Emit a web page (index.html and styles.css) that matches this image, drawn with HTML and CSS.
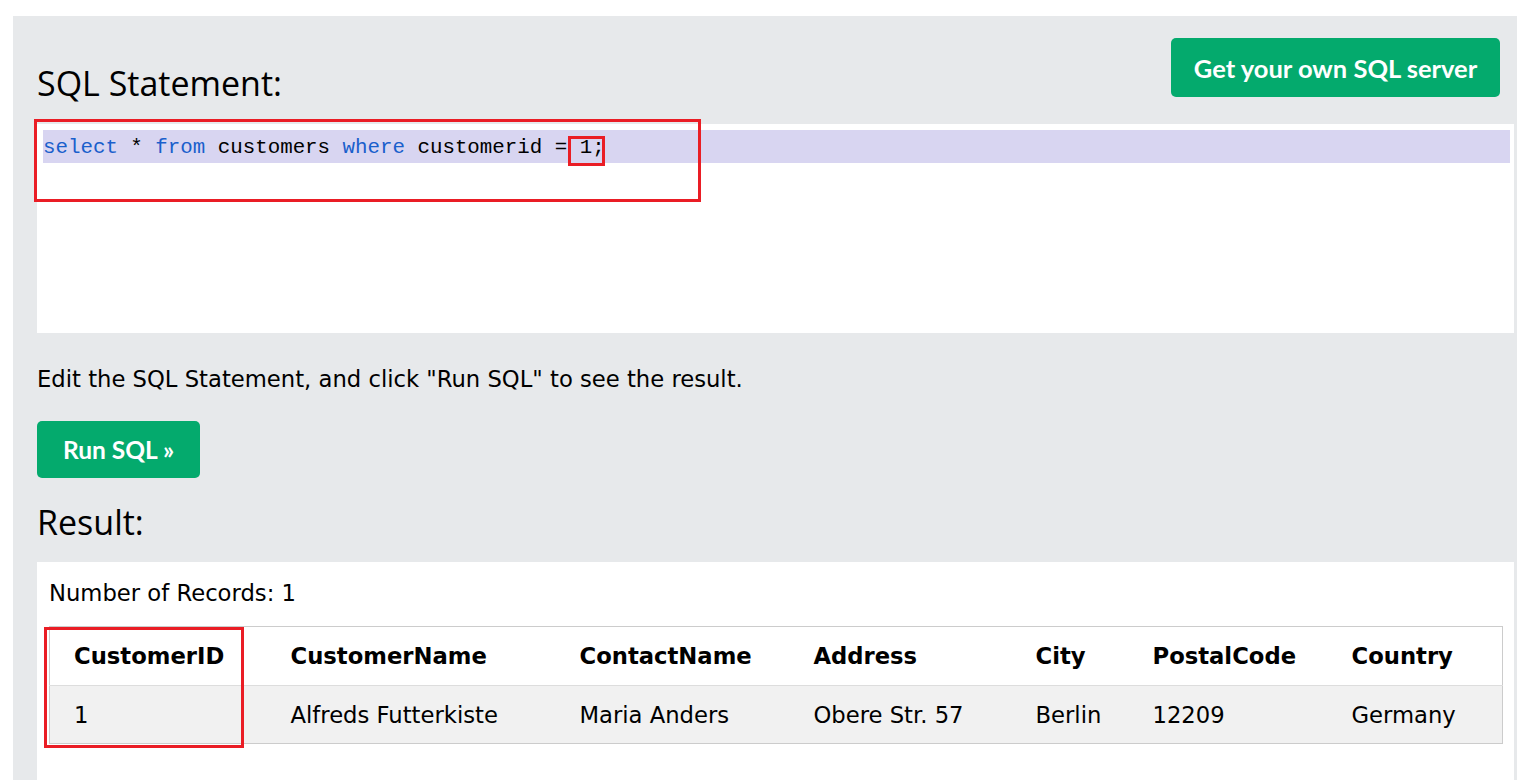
FILE: index.html
```html
<!DOCTYPE html>
<html>
<head>
<meta charset="utf-8">
<title>SQL Tryit</title>
<link rel="stylesheet" href="styles.css">
</head>
<body>
<div class="panel">
  <div class="head-row">
    <h2 class="title">SQL Statement:</h2>
    <a class="btn btn-server">Get your own SQL server</a>
  </div>
  <div class="editor">
    <div class="code-line"><span class="kw">select</span> * <span class="kw">from</span> customers <span class="kw">where</span> customerid = <span class="val">1;</span></div>
  </div>
  <p class="hint">Edit the SQL Statement, and click "Run SQL" to see the result.</p>
  <a class="btn btn-run">Run SQL »</a>
  <h2 class="title result-title">Result:</h2>
  <div class="result">
    <div class="records">Number of Records: 1</div>
    <table class="data">
      <colgroup>
        <col class="c1"><col class="c2"><col class="c3"><col class="c4"><col class="c5"><col class="c6"><col class="c7">
      </colgroup>
      <thead>
        <tr><th>CustomerID</th><th>CustomerName</th><th>ContactName</th><th>Address</th><th>City</th><th>PostalCode</th><th>Country</th></tr>
      </thead>
      <tbody>
        <tr><td>1</td><td>Alfreds Futterkiste</td><td>Maria Anders</td><td>Obere Str. 57</td><td>Berlin</td><td>12209</td><td>Germany</td></tr>
      </tbody>
    </table>
  </div>
  <div class="mark mark-stmt"></div>
  <div class="mark mark-val"></div>
  <div class="mark mark-col"></div>
</div>
</body>
</html>
```

FILE: styles.css
```css
html, body {
  margin: 0;
  padding: 0;
  background: #ffffff;
  overflow: hidden;
}
body {
  width: 1517px;
  height: 780px;
  font-family: "DejaVu Sans", Verdana, sans-serif;
  color: #000;
}
.panel {
  position: relative;
  box-sizing: border-box;
  margin: 16px 0 0 13px;
  width: 1504px;
  height: 764px;
  padding: 22px 3px 0 24px;
  background: #e7e9eb;
}
.head-row {
  display: flex;
  justify-content: space-between;
  align-items: flex-end;
  height: 59px;
}
.title {
  margin: 0;
  font-family: "Open Sans", "Noto Sans", sans-serif;
  font-weight: 400;
  font-size: 34px;
  line-height: 40px;
  margin-bottom: -6px;
}
.btn {
  display: inline-flex;
  align-items: center;
  justify-content: center;
  box-sizing: border-box;
  background: #04aa6d;
  color: #fff;
  border-radius: 5px;
  font-family: Lato, "Noto Sans", sans-serif;
  font-weight: 700;
  font-size: 25.5px;
}
.btn-server {
  width: 329px;
  height: 59px;
  margin-right: 14px;
}
.editor {
  margin-top: 27px;
  height: 209px;
  box-sizing: border-box;
  padding: 6px 4px 0 6px;
  background: #fff;
}
.code-line {
  height: 33px;
  line-height: 35px;
  background: #d8d5f1;
  font-family: "Liberation Mono", "DejaVu Sans Mono", monospace;
  font-size: 20.8px;
  white-space: pre;
}
.kw { color: #1a5fcc; }
.hint {
  margin: 32px 0 0 0;
  font-size: 22.7px;
  line-height: 28px;
}
.btn-run {
  margin-top: 28px;
  width: 163px;
  height: 57px;
  font-size: 24.5px;
}
.result-title {
  display: block;
  margin-top: 24px;
  margin-bottom: 0;
  line-height: 40px;
}
.result {
  margin-top: 20px;
  background: #fff;
  padding: 16px 12px 0 12px;
  height: 230px;
  box-sizing: border-box;
}
.records {
  font-size: 22.7px;
  line-height: 30px;
  margin-bottom: 18px;
}
.data {
  width: 1453px;
  table-layout: fixed;
  border-collapse: collapse;
  border: 1px solid #ccc;
  font-size: 22.7px;
}
.c1 { width: 229px; }
.c2 { width: 289px; }
.c3 { width: 234px; }
.c4 { width: 222px; }
.c5 { width: 117px; }
.c6 { width: 199px; }
.c7 { width: 163px; }
.data th, .data td {
  text-align: left;
  padding: 0 12px;
  white-space: nowrap;
}
.data th:first-child, .data td:first-child {
  padding-left: 24px;
}
.data th {
  height: 58px;
  font-weight: 700;
  border-bottom: 1px solid #ddd;
}
.data td {
  height: 57px;
  background: #f1f1f1;
}
.mark {
  position: absolute;
  box-sizing: border-box;
  border: 3px solid #ea1d25;
}
.mark-stmt { left: 21px; top: 103px; width: 667px; height: 83px; }
.mark-val { left: 555px; top: 120px; width: 37px; height: 30px; }
.mark-col { left: 31px; top: 611px; width: 200px; height: 121px; }
```
